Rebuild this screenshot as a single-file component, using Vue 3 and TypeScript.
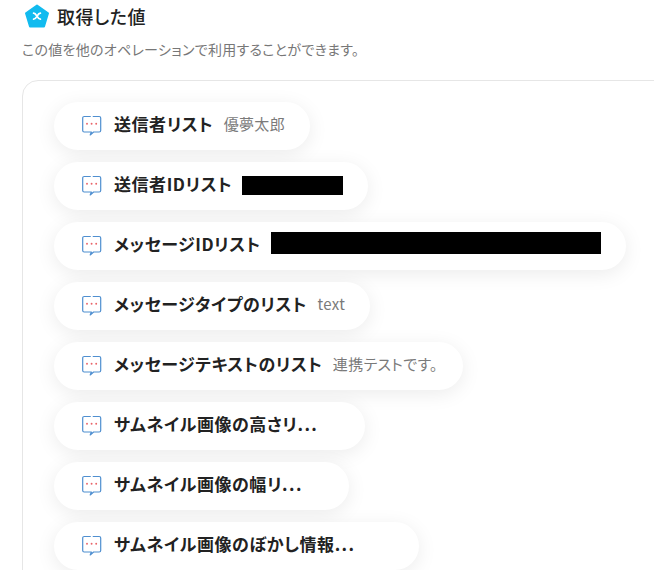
<template>
  <div class="page">
    <div class="heading">
      <svg class="logo" width="26" height="26" viewBox="0 0 26 26">
        <path d="M13 2.5 L24 10.3 L20 23.5 H6 L2 10.3 Z" fill="#12bbef" stroke="#12bbef" stroke-width="2" stroke-linejoin="round" />
        <path d="M9.6 10.2c1.6 0 2.2 1 3.4 3s1.8 3 3.4 3M16.4 10.2c-1.6 0-2.2 1-3.4 3s-1.8 3-3.4 3" fill="none" stroke="#fff" stroke-width="1.7" stroke-linecap="round" />
      </svg>
      <span class="heading-text">取得した値</span>
    </div>
    <p class="desc">この値を他のオペレーションで利用することができます。</p>
    <div class="card">
      <div v-for="item in items" :key="item.label" class="pill" :style="item.width ? { width: item.width + 'px' } : undefined">
        <svg class="chat" width="22" height="22" viewBox="0 0 22 22">
          <path d="M9.3 1.5H3.2A1.5 1.5 0 0 0 1.7 3V15.5A1.5 1.5 0 0 0 3.2 17H10.4L9.2 20L12.6 17H18.2A1.5 1.5 0 0 0 19.7 15.5V3A1.5 1.5 0 0 0 18.2 1.5H12.2" fill="none" stroke="#4f8fd0" stroke-width="1.2" stroke-linecap="round" stroke-linejoin="round" />
          <circle cx="6" cy="8.8" r="0.95" fill="#e9656a" />
          <circle cx="10.6" cy="8.8" r="0.95" fill="#e9656a" />
          <circle cx="15.2" cy="8.8" r="0.95" fill="#e9656a" />
        </svg>
        <span class="label">{{ item.label }}<span v-if="item.width" class="dots">...</span></span>
        <span v-if="item.value" class="value">{{ item.value }}</span>
        <span v-if="item.hidden" class="hidden" :style="{ width: item.hidden + 'px', height: item.hiddenH + 'px', marginTop: item.lift + 'px' }"></span>
      </div>
    </div>
  </div>
</template>

<script setup lang="ts">
interface Item {
  label: string
  value?: string
  hidden?: number
  hiddenH?: number
  lift?: number
  width?: number // truncated rows keep the pill width of the full text
}

const items: Item[] = [
  { label: '送信者リスト', value: '優夢太郎' },
  { label: '送信者IDリスト', hidden: 101, hiddenH: 19, lift: -1 },
  { label: 'メッセージIDリスト', hidden: 330, hiddenH: 22, lift: -6 },
  { label: 'メッセージタイプのリスト', value: 'text' },
  { label: 'メッセージテキストのリスト', value: '連携テストです。' },
  { label: 'サムネイル画像の高さリ', width: 311 },
  { label: 'サムネイル画像の幅リ', width: 295 },
  { label: 'サムネイル画像のぼかし情報', width: 365 }
]
</script>

<style>
html, body {
  margin: 0;
  background: #fff;
  overflow: hidden;
}
</style>

<style scoped>
.page {
  width: 654px;
  height: 570px;
  overflow: hidden;
  box-sizing: border-box;
  padding: 3px 0 0 22px;
  font-family: "Noto Sans CJK JP", "Noto Sans", sans-serif;
  font-feature-settings: "palt";
}

.heading {
  display: flex;
  align-items: center;
  gap: 7px;
  height: 26px;
}

.logo {
  flex: none;
  margin-left: 2px;
}

.heading-text {
  font-size: 18px;
  font-weight: 500;
  letter-spacing: 0.5px;
  color: #222;
}

.desc {
  margin: 11px 0 0;
  font-size: 14px;
  line-height: 18px;
  letter-spacing: 0.3px;
  color: #777;
}

.card {
  margin-top: 22px;
  width: 700px;
  height: 560px;
  box-sizing: border-box;
  border: 1px solid #e6e6e6;
  border-radius: 16px;
  padding: 21px 31px;
  display: flex;
  flex-direction: column;
  align-items: flex-start;
  gap: 12px;
}

.pill {
  height: 48px;
  flex: none;
  box-sizing: border-box;
  display: flex;
  align-items: center;
  padding: 0 25px 0 27px;
  background: #fff;
  border-radius: 24px;
  box-shadow: 0 4px 20px rgba(0, 0, 0, 0.08);
}

.chat {
  flex: none;
  margin-right: 11px;
}

.label {
  font-size: 17px;
  line-height: 20px;
  margin-top: -4px;
  font-weight: 700;
  letter-spacing: 0.55px;
  color: #222;
  white-space: nowrap;
}

.dots {
  letter-spacing: 1.4px;
}

.value {
  margin-left: 10.5px;
  margin-top: -4px;
  line-height: 20px;
  font-size: 15px;
  letter-spacing: 0.35px;
  color: #7a7a7a;
  white-space: nowrap;
}

.hidden {
  display: block;
  margin-left: 10px;
  background: #000;
}
</style>
